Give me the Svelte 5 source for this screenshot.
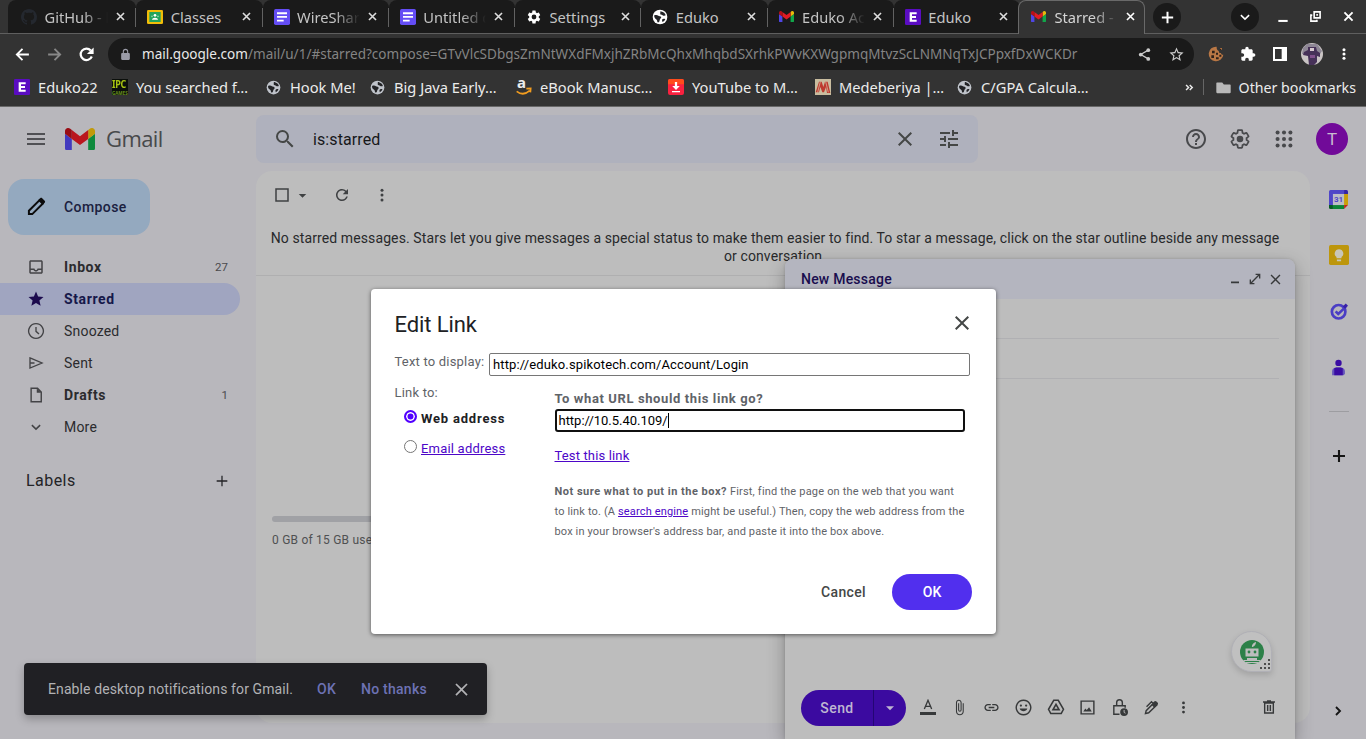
<script>
  const gmail = '<path fill="#4f46e5" d="M58 108h14V74L52 59v43c0 3.32 2.69 6 6 6"/><path fill="#11a64a" d="M120 108h14c3.32 0 6-2.69 6-6V59l-20 15"/><path fill="#e8b90c" d="M120 48v26l20-15v-8c0-7.42-8.47-11.65-14.4-7.2"/><path fill="#e01b24" d="M72 74V48l24 18 24-18v26L96 92"/><path fill="#b80f17" d="M52 51v8l20 15V48l-5.6-4.2c-5.94-4.45-14.4-.22-14.4 7.2"/>';
  const gear = 'M19.14 12.94c.04-.3.06-.61.06-.94 0-.32-.02-.64-.07-.94l2.03-1.58a.49.49 0 0 0 .12-.61l-1.92-3.32a.488.488 0 0 0-.59-.22l-2.39.96c-.5-.38-1.03-.7-1.62-.94l-.36-2.54a.484.484 0 0 0-.48-.41h-3.84c-.24 0-.43.17-.47.41l-.36 2.54c-.59.24-1.13.57-1.62.94l-2.39-.96c-.22-.08-.47 0-.59.22L2.74 8.87c-.12.21-.08.47.12.61l2.03 1.58c-.05.3-.09.63-.09.94s.02.64.07.94l-2.03 1.58a.49.49 0 0 0-.12.61l1.92 3.32c.12.22.37.29.59.22l2.39-.96c.5.38 1.03.7 1.62.94l.36 2.54c.05.24.24.41.48.41h3.84c.24 0 .44-.17.47-.41l.36-2.54c.59-.24 1.13-.56 1.62-.94l2.39.96c.22.08.47 0 .59-.22l1.92-3.32c.12-.22.07-.47-.12-.61z';
  const p = (d) => `<path d="${d}"/>`;
  const s = (d, w = 2) => `<path fill="none" stroke="currentColor" stroke-width="${w}" d="${d}"/>`;
  const globe = '<circle cx="12" cy="12" r="11"/><path fill="#222326" d="M3.3 9.5c2.2-.7 4.6-.9 6.2.6 1.2 1.1 3.1.3 4.1 1.7.9 1.3-.7 2.5-1.6 3.6-.9 1.2-.3 3.2-1.7 4.3-.9.7-2.3.1-2.4-1.1-.2-1.6-.3-2.6-1.8-3.4C4.3 14.2 3 12.3 3.3 9.5zM12.5 3.2c1.5.1 4 .8 5.8 2.5 1 1 1.9 2.300 2.300 3.800-1.500.8-3.500.8-4.700-.3-.9-.9-2.500-.3-3.300-1.500-.8-1.300.3-2.900-.1-4.500zM15.500 15.500c1-1.400 3.300-1 4.500-.3-.9 1.900-2.300 3.300-4.200 4.200-.7-1.200-1-2.800-.3-3.900z"/>';
  const dots = (r) => [5.5, 12, 18.5].map((y) => `<circle cx="12" cy="${y}" r="${r}"/>`).join('');
  const icons = {
    menu: p('M3 18h18v-2H3v2zm0-5h18v-2H3v2zm0-7v2h18V6H3z'),
    search: p('M15.5 14h-.79l-.28-.27A6.471 6.471 0 0 0 16 9.5 6.5 6.5 0 1 0 9.5 16c1.61 0 3.09-.59 4.23-1.57l.27.28v.79l5 4.99L20.49 19l-4.99-5zm-6 0C7.01 14 5 11.99 5 9.5S7.01 5 9.5 5 14 7.01 14 9.5 11.99 14 9.5 14z'),
    close: p('M19 6.41L17.59 5 12 10.59 6.41 5 5 6.41 10.59 12 5 17.59 6.41 19 12 13.41 17.59 19 19 17.59 13.41 12z'),
    boldclose: s('M5.5 5.5l13 13m0-13l-13 13', 3),
    tune: p('M3 17v2h6v-2H3zM3 5v2h10V5H3zm10 16v-2h8v-2h-8v-2h-2v6h2zM7 9v2H3v2h4v2h2V9H7zm14 4v-2H11v2h10zm-6-4h2V7h4V5h-4V3h-2v6z'),
    help: p('M11 18h2v-2h-2v2zm1-16C6.48 2 2 6.48 2 12s4.48 10 10 10 10-4.48 10-10S17.52 2 12 2zm0 18c-4.41 0-8-3.59-8-8s3.59-8 8-8 8 3.59 8 8-3.59 8-8 8zm0-14c-2.21 0-4 1.79-4 4h2c0-1.1.9-2 2-2s2 .9 2 2c0 2-3 1.75-3 5h2c0-2.25 3-2.5 3-5 0-2.21-1.79-4-4-4z'),
    gearline: s(gear, 1.9) + '<circle cx="12" cy="12" r="3.6"/>',
    gear: `<path fill-rule="evenodd" d="${gear}M12 15.6a3.6 3.6 0 1 1 0-7.2 3.6 3.6 0 0 1 0 7.2z"/>`,
    apps: [5, 12, 19].flatMap((x) => [5, 12, 19].map((y) => `<circle cx="${x}" cy="${y}" r="2.2"/>`)).join(''),
    refresh: p('M17.65 6.35A7.958 7.958 0 0 0 12 4c-4.42 0-7.99 3.58-7.99 8s3.57 8 7.99 8c3.73 0 6.84-2.55 7.73-6h-2.08A5.99 5.99 0 0 1 12 18c-3.31 0-6-2.69-6-6s2.69-6 6-6c1.66 0 3.14.69 4.22 1.78L13 11h7V4l-2.35 2.35z'),
    reload: s('M18.7 14.5a7.3 7.3 0 1 1-1.3-7.6', 2.8) + p('M21 3v8.5h-8.500z'),
    dots: dots(2), chromedots: dots(2.3),
    inbox: p('M19 3H5c-1.1 0-2 .9-2 2v14c0 1.1.9 2 2 2h14c1.1 0 2-.9 2-2V5c0-1.1-.9-2-2-2zm0 16H5v-3h3.56c.69 1.19 1.97 2 3.45 2s2.75-.81 3.45-2H19v3zm0-5h-4.99c0 1.1-.9 2-2 2s-2-.9-2-2H5V5h14v9z'),
    star: p('M12 17.27L18.18 21l-1.64-7.03L22 9.24l-7.19-.61L12 2 9.19 8.63 2 9.24l5.46 4.73L5.82 21z'),
    starline: p('M22 9.24l-7.19-.62L12 2 9.19 8.63 2 9.24l5.46 4.73L5.82 21 12 17.27 18.18 21l-1.63-7.03L22 9.24zM12 15.4l-3.76 2.27 1-4.28-3.32-2.88 4.38-.38L12 6.1l1.71 4.04 4.38.38-3.32 2.88 1 4.28L12 15.4z'),
    clock: s('M12 2.2a9.8 9.8 0 1 0 .01 0zM12 6.5v6l4 3.5', 1.8),
    send: s('M4 5.2l16 6.8-16 6.8zM4 12h6', 1.8),
    draft: s('M5.5 3h8.5l5 5v13h-13.5z', 1.9) + p('M13 3v6h6z'),
    down: s('M6.5 9.5l5.5 5.3 5.5-5.3', 2),
    right: s('M9 6l6 6-6 6', 2.8),
    plus: s('M12 4v16M4 12h16', 1.9),
    boldplus: s('M12 4v16M4 12h16', 2.8),
    caret: p('M6 9.5l6 6 6-6z'),
    box: s('M4 4h16v16H4z', 2),
    back: s('M21 12H4.5M12 4l-8 8 8 8', 2.6),
    forward: s('M3 12h16.5M12 4l8 8-8 8', 2.6),
    lock: '<path fill-rule="evenodd" d="M18 9h-1V6.5a5 5 0 0 0-10 0V9H6c-1.1 0-2 .9-2 2v9c0 1.1.9 2 2 2h12c1.1 0 2-.9 2-2v-9c0-1.1-.9-2-2-2zM9 9V6.5a3 3 0 0 1 6 0V9z"/>',
    share: s('M18 5L6 12l12 7', 2) + '<circle cx="18" cy="5" r="3"/><circle cx="6" cy="12" r="3"/><circle cx="18" cy="19" r="3"/>',
    puzzle: p('M20.5 11H19V7c0-1.1-.9-2-2-2h-4V3.5C13 2.12 11.88 1 10.5 1S8 2.12 8 3.5V5H4c-1.1 0-1.99.9-1.99 2v3.8H3.5c1.49 0 2.7 1.21 2.7 2.7s-1.21 2.7-2.7 2.7H2V20c0 1.1.9 2 2 2h3.8v-1.5c0-1.49 1.21-2.7 2.7-2.7 1.49 0 2.7 1.21 2.7 2.7V22H17c1.1 0 2-.9 2-2v-4h1.5c1.38 0 2.5-1.12 2.5-2.5S21.88 11 20.5 11z'),
    panel: '<path fill-rule="evenodd" d="M1.5 1.5h21v21h-21zM4.5 4.5v15h10v-15z"/>',
    cookie: '<path fill="#b97745" d="M13 1a11 11 0 1 0 10 12c-2 .3-3.5-.8-3.5-2.6-2.3.4-3.6-1-3.2-3C14 6.8 12.7 4 13 1zM18 3h3v3h-3z"/><path fill="#2e211a" d="M6 7h4v4H6zM5 14h4v4H5zM12 10h3v3h-3zM12 17h4v3h-4zM17 13h3v3h-3zM18 4h2v2h-2z"/>',
    github: '<path transform="scale(1.5)" fill="#24282f" d="M8 0C3.58 0 0 3.58 0 8c0 3.54 2.29 6.53 5.47 7.59.4.07.55-.17.55-.38 0-.19-.01-.82-.01-1.49-2.01.37-2.53-.49-2.69-.94-.09-.23-.48-.94-.82-1.13-.28-.15-.68-.52-.01-.53.63-.01 1.08.58 1.23.82.72 1.21 1.87.87 2.33.66.07-.52.28-.87.51-1.07-1.78-.2-3.64-.89-3.64-3.95 0-.87.31-1.59.82-2.15-.08-.2-.36-1.02.08-2.12 0 0 .67-.21 2.2.82.64-.18 1.32-.27 2-.27s1.36.09 2 .27c1.53-1.04 2.2-.82 2.2-.82.44 1.1.16 1.92.08 2.12.51.56.82 1.27.82 2.15 0 3.07-1.87 3.75-3.65 3.95.29.25.54.73.54 1.48 0 1.07-.01 1.93-.01 2.2 0 .21.15.46.55.38A8.01 8.01 0 0 0 16 8c0-4.42-3.58-8-8-8z"/>',
    classroom: '<rect y="1.5" width="24" height="21" rx="2" fill="#f2bd08"/><path fill="#21a35b" d="M3.5 4.5h17v15h-17z"/><circle cx="12" cy="9.5" r="2" fill="#fff"/><path fill="#fff" d="M7.5 16c0-4 9-4 9 0z"/><circle cx="7.5" cy="11" r="1.3" fill="#8dd3ac"/><circle cx="16.5" cy="11" r="1.3" fill="#8dd3ac"/>',
    docs: '<rect width="24" height="24" rx="2.5" fill="#644df5"/><path fill="#fff" d="M4.5 5h15v2.8h-15zM4.5 10.5h15v2.8h-15zM4.5 16h10v2.8h-10z"/>',
    globe,
    eduko: '<rect width="24" height="24" rx="2" fill="#5a0cc2"/><path fill="#fff" d="M7 5h10.5v3H10.5v2.5h6v3h-6V16h7v3H7z"/>',
    amazon: '<path fill="none" stroke="#f29c1f" stroke-width="2.6" d="M1 18.5c6.5 5 14 4 19.5-1M15.5 14.5l6.5-.5-.5 6"/>',
    ytdl: '<rect width="24" height="24" rx="3" fill="#f9213f"/><path fill="#ff4c1c" d="M3 0h18a3 3 0 0 1 3 3v5H0V3a3 3 0 0 1 3-3z"/><path fill="#fff" d="M10.3 4.5h3.4v6h4L12 16.5l-5.7-6h4zM6 18h12v2H6z"/>',
    mede: '<rect width="24" height="24" fill="#c9bd9f"/><path fill="#be3b2f" d="M6 4h4l2.5 8L15 4h4l4 17h-5l-1.5-9-3 8h-2.5l-3-8L6 20H1z"/><path stroke="#e0c9b0" d="M8 4L4 20M16 4l4 16"/>',
    folder: p('M2 4h8l2.5 3H22c.8 0 1.5.7 1.5 1.5v11c0 .8-.7 1.5-1.5 1.5H2c-.8 0-1.5-.7-1.5-1.5v-14C.5 4.7 1.2 4 2 4z'),
    chevrons: s('M4.5 6.5L10 12l-5.5 5.5M12.5 6.5L18 12l-5.5 5.5', 3.2),
    restore: s('M9.5 3.5h11v11h-11z', 3) + s('M6 9.500H3.500v11h11V18', 3) + p('M13.5 7.5h3v3h-3z'),
    minimize: p('M4 17h16v3.5H4z'),
    expand: s('M13 4h7v7M20 4L4 20M4 13v7h7', 2.3),
    pencil: s('M3.5 20.5v-4L16 4l4 4L7.5 20.5z', 2.4) + p('M15 3l2-1.5c.7-.7 1.7-.7 2.4 0l3 3c.7.7.7 1.7 0 2.4l-2 2z'),
    format: s('M6.5 15L12 2l5.5 13M8.5 11h7', 2) + p('M0 19.5h24V24H0z'),
    clip: p('M16.5 6v11.5c0 2.21-1.79 4-4 4s-4-1.79-4-4V5a2.5 2.5 0 0 1 5 0v10.5c0 .55-.45 1-1 1s-1-.45-1-1V6H10v9.5a2.5 2.5 0 0 0 5 0V5c0-2.21-1.79-4-4-4S7 2.79 7 5v12.5c0 3.04 2.46 5.5 5.5 5.5s5.5-2.46 5.5-5.5V6h-1.5z'),
    link: p('M3.9 12c0-1.71 1.39-3.1 3.1-3.1h4V7H7c-2.76 0-5 2.24-5 5s2.24 5 5 5h4v-1.9H7c-1.71 0-3.1-1.39-3.1-3.1zM8 13h8v-2H8v2zm9-6h-4v1.9h4c1.71 0 3.1 1.39 3.1 3.1s-1.39 3.1-3.1 3.1h-4V17h4c2.76 0 5-2.24 5-5s-2.24-5-5-5z'),
    smile: s('M12 1.8a10.2 10.2 0 1 0 .01 0z', 2) + '<circle cx="8.3" cy="9.3" r="1.6"/><circle cx="15.7" cy="9.3" r="1.6"/>' + p('M6.5 13.5h11c-1.8 5-9.2 5-11 0z'),
    drive: s('M9 3h6l7 12-3 5.5H5L2 15z', 2) + s('M12 8.5l4 7H8z', 2.2),
    image: s('M3 3h18v18H3z', 2) + p('M6 17.5l3-4 2 2.2 3.200-4.200L18 17.500z'),
    lockclock: s('M12 21.500H4v-12h16v3M8 9.500V5a4 4 0 0 1 8 0v4.500', 2) + '<circle cx="18.5" cy="18.5" r="5.5"/><path fill="none" stroke="#bdbdbd" stroke-width="1.3" d="M18.5 15.5V19l2 1"/>',
    pen: s('M3.500 20.500l1-4L16 5l3.500 3.500L8 19.500z', 2) + p('M12 8l4-4.500c1-1 2-1 3 0l1.500 1.500c1 1 1 2 0 3L16 12.500z') + s('M5 11l7-7 2 2', 2),
    trash: s('M5.500 6h13v15h-13zM3 4.500h18M9 3h6', 2.1) + s('M10 9v9M14 9v9', 2.2),
    calendar: '<path fill="#4f46c8" d="M0 2a2 2 0 0 1 2-2h17v5H5v14H0z"/><path fill="#3424a8" d="M19 0h3a2 2 0 0 1 2 2v3h-5z"/><path fill="#c99f0b" d="M19 5h5v14h-5z"/><path fill="#0c8537" d="M5 19h14v5H5z"/><path fill="#075c25" d="M0 19h5v5H2a2 2 0 0 1-2-2z"/><path fill="#bf2a20" d="M19 19h5l-5 5z"/><path fill="#bdbdc6" d="M5 5h14v14H5z"/>',
    keep: '<rect width="24" height="24" rx="2" fill="#bd960c"/><path fill="#c8c6b9" d="M12 5a5.200 5.200 0 0 0-3 9.400V16h6v-1.600A5.200 5.200 0 0 0 12 5zM9.500 17.500h5v2h-5z"/>',
    tasks: '<circle cx="11.5" cy="13" r="9" fill="none" stroke="#4a3dc4" stroke-width="3.6"/><path fill="none" stroke="#4a3dc4" stroke-width="3.5" d="M7.500 12.500l3.500 3.500 10-9.500"/><path fill="#3820a9" d="M17 6l4-4 3 3-4 4z"/>',
    contacts: '<circle cx="12" cy="5.5" r="4.5" fill="#3a0ca3"/><path fill="#6454ba" d="M3 23v-6c0-3 3-5 6-5h6c3 0 6 2 6 5v4l-2 2z"/><path fill="#3a0ca3" d="M6 23V13.200l3-1.200h6l3 1.200V23z"/>',
    robot: '<circle cx="12" cy="12" r="12" fill="#2c8048"/><path fill="#bdbdbd" d="M12 7c-.5-2 1.500-4.500 4-5 0 2.500-1.500 4.500-3.500 5zM5.500 8.500h13v8h-13zM7 18h10v2H7z"/><path fill="none" stroke="#bdbdbd" d="M3.500 20.500h17M6 22.500h12"/><circle cx="9" cy="12" r="1.4" fill="#2c8048"/><circle cx="15" cy="12" r="1.4" fill="#2c8048"/>'
  };
  const tabs = [
    ['github', 'GitHub - k', true], ['classroom', 'Classes'], ['docs', 'WireShar', true], ['docs', 'Untitled d', true],
    ['gear', 'Settings'], ['globe', 'Eduko'], ['gmail', 'Eduko Ac', true], ['eduko', 'Eduko'], ['gmail', 'Starred -', true]
  ];
  const bookmarks = [
    ['eduko', 'Eduko22', 98], ['ipc', 'You searched f…', 154], ['globe', 'Hook Me!', 104], ['globe', 'Big Java Early…', 146],
    ['amazon', 'eBook Manusc…', 152], ['ytdl', 'YouTube to M…', 147], ['mede', 'Medeberiya |…', 142], ['globe', 'C/GPA Calcula…', 160]
  ];
  const nav = [
    ['inbox', 'Inbox', '27', 'bold'], ['star', 'Starred', '', 'bold active'], ['clock', 'Snoozed', '', ''],
    ['send', 'Sent', '', ''], ['draft', 'Drafts', '1', 'bold'], ['down', 'More', '', '']
  ];
  const tools = ['format', 'clip', 'link', 'smile', 'drive', 'image', 'lockclock', 'pen', 'dots'];
</script>

{#snippet icon(name, size = 20)}
  {#if name === 'gmail'}
    <svg width={size} height={size * 0.75} viewBox="52 42 88 66">{@html gmail}</svg>
  {:else}
    <svg width={size} height={size} viewBox="0 0 24 24" fill="currentColor">{@html icons[name]}</svg>
  {/if}
{/snippet}

<div class="browser">
  <div class="tabs">
    {#each tabs as [ic, label, fade], i}
      <div class="tab" class:current={i === 8} class:nosep={i === 7}>
        <span class="fav">{@render icon(ic, ic === 'gmail' ? 15 : 16)}</span>
        <span class="label" class:fade>{label}</span>
        <span class="x">{@render icon('boldclose', 13)}</span>
      </div>
    {/each}
    <span class="round newtab">{@render icon('boldplus', 17)}</span>
    <span class="round menu">{@render icon('down', 18)}</span>
    <span class="win">{@render icon('minimize', 14)}</span>
    <span class="win">{@render icon('restore', 13)}</span>
    <span class="win">{@render icon('boldclose', 15)}</span>
  </div>
  <div class="toolbar">
    <span class="nav">{@render icon('back', 17)}</span>
    <span class="nav dim">{@render icon('forward', 17)}</span>
    <span class="nav">{@render icon('reload', 19)}</span>
    <div class="omni">
      <span class="lock">{@render icon('lock', 13)}</span>
      <span class="url"><b>mail.google.com</b>/mail/u/1/#starred?compose=GTvVlcSDbgsZmNtWXdFMxjhZRbMcQhxMhqbdSXrhkPWvKXWgpmqMtvzScLNMNqTxJCPpxfDxWCKDr</span>
      <span class="ob">{@render icon('share', 15)}</span>
      <span class="ob">{@render icon('starline', 17)}</span>
    </div>
    <span class="ext">{@render icon('cookie', 16)}</span>
    <span class="ext">{@render icon('puzzle', 16)}</span>
    <span class="ext">{@render icon('panel', 16)}</span>
    <span class="ext"><svg width="22" height="22" viewBox="0 0 22 22"><circle cx="11" cy="11" r="11" fill="#c9c4c4" /><path fill="#8e8795" d="M2 5l4-4 10 0 5 7-2 3H1z" /><path fill="#463158" d="M7 4h8l1 4 3 2v4l-3-1v6l-3 3H8l-1-9-5-1 1-3 4-2z" /><path fill="#d6c8ce" d="M9 5h4v3H9z" /><path fill="#81508c" d="M9 12h5v3H9z" /></svg></span>
    <span class="ext">{@render icon('chromedots', 16)}</span>
  </div>
  <div class="bookmarks">
    {#each bookmarks as [ic, label, w]}
      <div class="bm" style:width="{w}px">
        {#if ic === 'ipc'}<span class="ipc"><b>IPC</b><i>GAMES</i></span>
        {:else if ic === 'amazon'}<span class="amz"><b>a</b>{@render icon('amazon', 16)}</span>
        {:else}<span class="bi" class:grey={ic === 'globe'}>{@render icon(ic, ic === 'globe' ? 15 : 16)}</span>{/if}
        <span>{label}</span>
      </div>
    {/each}
    <div class="more">{@render icon('chevrons', 11)}<i></i><span class="folder">{@render icon('folder', 15)}</span><span class="other">Other bookmarks</span></div>
  </div>
</div>

<div class="page">
  <header>
    <span class="hm">{@render icon('menu', 24)}</span>
    <span class="logo">{@render icon('gmail', 30)}</span>
    <span class="brand">Gmail</span>
    <div class="search">
      <span class="si">{@render icon('search', 24)}</span><span class="q">is:starred</span>
      <span class="sb">{@render icon('close', 24)}</span><span class="sb">{@render icon('tune', 24)}</span>
    </div>
    <div class="tools"><span>{@render icon('help', 24)}</span><span>{@render icon('gearline', 22)}</span><span>{@render icon('apps', 22)}</span><span><i class="avatar">T</i></span></div>
  </header>
  <div class="body">
    <aside>
      <div class="compose">{@render icon('pencil', 20)}<span>Compose</span></div>
      <nav>
        {#each nav as [ic, label, n, cls]}
          <div class="item {cls}"><span class="ni">{@render icon(ic, 18)}</span><span class="nl">{label}</span><span class="n">{n}</span></div>
        {/each}
      </nav>
      <div class="labels"><span>Labels</span>{@render icon('plus', 16)}</div>
    </aside>
    <main>
      <div class="bar"><span>{@render icon('box', 18)}</span><span class="car">{@render icon('caret', 15)}</span><span class="rf">{@render icon('refresh', 18)}</span>{@render icon('dots', 18)}</div>
      <p class="empty">No starred messages. Stars let you give messages a special status to make them easier to find. To star a message, click on the star outline beside any message<br />or conversation.</p>
      <div class="storage"><div class="meter"></div><span>0 GB of 15 GB used</span></div>
    </main>
    <div class="side">
      <span class="cal">{@render icon('calendar', 19)}<b>31</b></span>
      <span>{@render icon('keep', 20)}</span>
      <span>{@render icon('tasks', 18)}</span>
      <span>{@render icon('contacts', 17)}</span>
      <i></i>
      <span class="add">{@render icon('boldplus', 18)}</span>
      <span class="chev">{@render icon('right', 16)}</span>
    </div>
  </div>
</div>

<section class="message">
  <div class="mh"><b>New Message</b><span>{@render icon('minimize', 12)}</span><span>{@render icon('expand', 14)}</span><span>{@render icon('close', 17)}</span></div>
  <div class="field"></div>
  <div class="field"></div>
  <div class="blank"></div>
  <div class="mf">
    <div class="sendbtn"><b>Send</b><span>{@render icon('caret', 16)}</span></div>
    {#each tools as t}<span class="tool">{@render icon(t, t === 'drive' ? 18 : t === 'format' ? 16 : 17)}</span>{/each}
    <span class="tool bin">{@render icon('trash', 16)}</span>
  </div>
  <div class="badge">{@render icon('robot', 24)}<svg class="grip" width="10" height="10" viewBox="0 0 10 10" fill="#4d4d4d"><path d="M8 0h2v2H8zM4 4h2v2H4zM8 4h2v2H8zM0 8h2v2H0zM4 8h2v2H4zM8 8h2v2H8z" /></svg></div>
</section>

<div class="toast"><span class="tt">Enable desktop notifications for Gmail.</span><b>OK</b><b class="nt">No thanks</b>{@render icon('close', 21)}</div>

<div class="dialog">
  <div class="dh"><h1>Edit Link</h1>{@render icon('close', 24)}</div>
  <div class="row"><span class="ttd">Text to display:</span><div class="input">http://eduko.spikotech.com/Account/Login</div></div>
  <div class="cols">
    <div class="left">
      <span class="lt">Link to:</span>
      <div class="opt"><i class="radio on"></i><b>Web address</b></div>
      <div class="opt"><i class="radio"></i><u>Email address</u></div>
    </div>
    <div class="rightcol">
      <b class="q1">To what URL should this link go?</b>
      <div class="input focus">http://10.5.40.109/<i class="cursor"></i></div>
      <u class="test">Test this link</u>
      <p><span class="l1"><b>Not sure what to put in the box?</b> First, find the page on the web that you want</span><br /><span class="l2">to link to. (A <u>search engine</u> might be useful.) Then, copy the web address from the</span><br /><span class="l3">box in your browser's address bar, and paste it into the box above.</span></p>
    </div>
  </div>
  <div class="actions"><span class="cancel">Cancel</span><span class="ok">OK</span></div>
</div>

<style>
  :global(body) { overflow: hidden; background: #b8b7bc; }
  :global(#app) { position: relative; width: 1366px; height: 739px; overflow: hidden; font-family: Roboto, sans-serif; }
  :global(#app *) { box-sizing: border-box; }
  :global(#app svg) { display: block; flex: none; }
  span, b { white-space: nowrap; }
  .browser { height: 107px; background: #333; border-bottom: 1px solid #686868; color: #fff; font-family: "Noto Sans", sans-serif; font-size: 14.67px; }
  .tabs { display: flex; height: 34px; padding-left: 10px; align-items: flex-start; background: linear-gradient(#5f5f5f, #5f5f5f) 0 33px / 100% 1px no-repeat; }
  .tab { position: relative; flex: none; width: 126.25px; height: 33px; display: flex; align-items: center; padding-left: 11px; background: #1a1a1a; border-radius: 8px 8px 0 0; color: #c4c4c4; }
  .tab:first-child { margin-left: -2px; width: 128.25px; padding-left: 13px; }
  .tab::after { content: ""; position: absolute; right: 0; top: 8px; width: 1px; height: 19px; background: #626262; z-index: 1; }
  .tab.current::after, .tab.nosep::after { display: none; }
  .tab.current { height: 34px; background: #333; border: 1px solid #696969; border-bottom: 0; margin-left: -2px; padding: 0 0 2px 12px; width: 127px; color: #d5d5d5; z-index: 2; }
  .fav { width: 23.5px; flex: none; color: #fff; }
  .label { width: 64px; overflow: hidden; flex: none; line-height: 24px; }
  .label.fade { width: 63px; margin-right: 1px; -webkit-mask-image: linear-gradient(90deg, #000 60%, transparent 100%); mask-image: linear-gradient(90deg, #000 60%, transparent 100%); }
  .x { margin-left: 5px; color: #ddd; }
  .current .x { color: #fff; }
  .round { display: grid; place-items: center; width: 28px; height: 28px; border-radius: 50%; background: #1a1a1a; margin-top: 3px; flex: none; }
  .newtab { margin-left: 8px; }
  .menu { margin-left: 50px; }
  .win { width: 32.5px; height: 33px; display: grid; place-items: center; flex: none; }
  .menu + .win { margin-left: 8px; }
  .toolbar { height: 40px; display: flex; align-items: center; padding-left: 6px; }
  .nav, .ext { width: 32px; display: grid; place-items: center; flex: none; }
  .dim { color: #888; }
  .omni { width: 1086px; margin: 0 6px; height: 32px; border-radius: 16px; background: #1a1a1a; display: flex; align-items: center; color: #848484; flex: none; }
  .omni b { font-weight: 400; color: #e8e8e8; }
  .lock { width: 34px; padding-left: 11px; color: #9a9ba7; flex: none; }
  .url { flex: 1; font-size: 13.54px; }
  .ob { width: 32px; display: grid; place-items: center; color: #ccc; flex: none; }
  .ob:last-child { margin-right: 2px; }
  .bookmarks { height: 32px; display: flex; align-items: center; padding-left: 14px; margin-top: -3px; color: #ececec; }
  .bm { display: flex; align-items: center; flex: none; }
  .bi, .ipc, .amz { width: 24px; flex: none; }
  .grey { color: #bfc3ca; }
  .ipc { margin-right: 8px; width: 16px; height: 16px; background: #0b0f0b; color: #a8c412; font-size: 9px; letter-spacing: -.3px; overflow: hidden; display: flex; flex-direction: column; gap: 2px; }
  .ipc b { transform: scaleY(1.2); line-height: 10px; }
  .ipc i { font-size: 4.5px; line-height: 4px; font-style: normal; color: #658e1b; font-weight: 700; letter-spacing: 0; }
  .amz { position: relative; height: 16px; }
  .amz b { position: absolute; left: 1px; top: -8px; font-size: 15px; line-height: 22px; }
  .more { margin-left: auto; display: flex; align-items: center; padding-right: 10px; }
  .more i { height: 16px; width: 1px; background: #666; margin: 0 12px 0 8px; }
  .folder { color: #b9b9b9; width: 23px; }
  .other { font-size: 14.2px; }

  .page { height: 632px; background: #b8b7bc; color: #3d3d40; }
  header { height: 64px; display: flex; align-items: center; }
  .hm { width: 65px; padding-left: 24px; color: #505054; flex: none; }
  .logo { width: 41px; flex: none; filter: brightness(.83); }
  .brand { width: 150px; flex: none; font-family: "Open Sans", sans-serif; font-size: 22px; line-height: 30px; margin-top: -2px; color: #48494b; letter-spacing: -.6px; }
  .search { width: 722px; height: 48px; border-radius: 8px; background: #afb1bd; display: flex; align-items: center; padding-left: 17px; flex: none; color: #454746; }
  .si { width: 39px; }
  .q { flex: 1; font-size: 16px; color: #17181a; padding-left: 1px; letter-spacing: .1px; }
  .sb { width: 44px; display: grid; place-items: center; }
  .sb:last-child { margin-right: 7px; }
  .tools { display: flex; margin-left: 196px; color: #48494c; }
  .tools span { width: 44px; display: grid; place-items: center; }
  .tools span:last-child { width: 52px; }
  .avatar { width: 32px; height: 32px; border-radius: 50%; background: #710a99; color: #c8bdcf; font: 17px/33px Roboto, sans-serif; text-align: center; }
  .body { display: flex; height: 568px; }
  aside { width: 256px; padding-top: 8px; flex: none; }
  .compose { margin-left: 8px; width: 142px; height: 56px; border-radius: 16px; background: #94a9bf; display: flex; align-items: center; gap: 18px; padding-left: 18px; font-size: 14px; font-weight: 500; color: #1b2140; letter-spacing: .42px; }
  :global(.compose svg) { color: #0b0b0b; }
  aside nav { padding-top: 16px; }
  .item { width: 240px; height: 32px; display: flex; align-items: center; padding: 0 12px 0 27px; border-radius: 0 16px 16px 0; font-size: 14px; color: #2b2b2e; }
  .ni { width: 37px; color: #434346; flex: none; }
  .nl { flex: 1; letter-spacing: .2px; }
  .bold .nl { font-weight: 700; letter-spacing: .6px; }
  .n { font-size: 11.5px; color: #4a4a4d; }
  .active { background: #a0a5c0; color: #16184a; }
  .active .ni { color: #1c0b4e; }
  .labels { display: flex; justify-content: space-between; align-items: center; height: 42px; margin-top: 16.5px; padding: 0 26px; font-size: 16px; line-height: 18px; color: #232326; letter-spacing: .45px; }
  main { width: 1054px; height: 552px; flex: none; border-radius: 16px; background: #bdbdbd; overflow: hidden; color: #3e4042; }
  .bar { height: 48px; display: flex; align-items: center; padding-left: 17px; color: #3f4143; }
  .car { width: 41px; padding-left: 3.500px; }
  .bar .rf { width: 41px; padding-left: 1px; }
  .empty { margin: 0; height: 57px; padding: 10px 16px 0 0; text-align: center; font-size: 14px; line-height: 18px; color: #28292b; border-bottom: 1px solid #afafb0; letter-spacing: .105px; white-space: nowrap; }
  .storage { margin-top: 240px; padding-left: 16px; font-size: 12px; color: #4f5052; letter-spacing: .22px; }
  .meter { width: 224px; height: 6px; border-radius: 3px; background: #a0a1a5; margin-bottom: 11px; }
  .side { width: 56px; display: flex; flex-direction: column; align-items: center; padding-left: 1px; }
  .side > span { height: 56px; display: grid; place-items: center; flex: none; }
  .side > i { width: 20px; height: 1px; background: #9d9da1; margin: 16px 0 15px; }
  .cal { position: relative; }
  .cal b { position: absolute; font-size: 8px; color: #4f46c8; }
  .side .add { color: #151515; height: 58px; }
  .side .chev { color: #151515; margin: 198px 2px 0 0; }

  .message { position: absolute; left: 785px; top: 259px; width: 510px; height: 480px; background: #bdbdbd; border-radius: 8px 8px 0 0; box-shadow: 0 6px 18px rgba(0,0,0,.3), 0 0 3px rgba(0,0,0,.15); display: flex; flex-direction: column; color: #37393a; }
  .mh { height: 40px; flex: none; background: #b4b5bf; border-radius: 8px 8px 0 0; display: flex; align-items: center; padding: 0 10px 0 16px; font-size: 14px; }
  .mh b { flex: 1; font-weight: 500; color: #190d4e; letter-spacing: .22px; }
  .mh span { width: 20px; display: grid; place-items: center; }
  .field { height: 40px; margin: 0 16px; border-bottom: 1px solid #b0b0b3; flex: none; }
  .blank { flex: 1; }
  .mf { height: 64px; display: flex; align-items: center; padding: 0 10px 0 16px; }
  .sendbtn { width: 105px; height: 36px; border-radius: 18px; background: #3b0aa0; color: #bfb7d2; display: flex; overflow: hidden; font-size: 14px; margin: 2px 5.500px 0 0; }
  .sendbtn b { width: 72px; line-height: 36px; text-align: center; font-weight: 500; letter-spacing: .4px; }
  .sendbtn span { flex: 1; display: grid; place-items: center; border-left: 1px solid #240674; padding-right: 1px; }
  .tool { width: 32px; display: grid; place-items: center; flex: none; }
  .bin { margin-left: auto; }
  .badge { position: absolute; left: 446px; top: 372px; width: 41px; height: 41px; border: 1px solid #b0b0b6; border-radius: 50% 50% 3px 50%; display: grid; place-items: center; box-shadow: 0 3px 6px rgba(0,0,0,.15); background: #c0c0c0; }
  .grip { position: absolute; right: 1px; bottom: 2px; }

  .toast { position: absolute; left: 24px; top: 663px; width: 463px; height: 52px; border-radius: 4px; background: #202024; display: flex; align-items: center; padding-left: 24px; color: #b2b2b5; font-size: 14px; box-shadow: 0 4px 8px rgba(0,0,0,.25); }
  .tt { width: 269px; letter-spacing: .1px; }
  .toast b { width: 44px; font-weight: 500; color: #6d72b4; letter-spacing: .25px; }
  .toast .nt { width: 89.500px; }

  .dialog { position: absolute; left: 371px; top: 289px; width: 625px; height: 345px; background: #fff; border-radius: 4px; box-shadow: 0 1px 4px rgba(0,0,0,.55); padding: 20px 24px 24px 23.500px; display: flex; flex-direction: column; font-size: 13px; color: #5f6368; }
  .dh { display: flex; justify-content: space-between; align-items: center; height: 28px; margin-right: -2px; color: #444746; }
  h1 { margin: 3px 0 0; font-size: 22px; font-weight: 400; color: #202124; letter-spacing: -.1px; }
  .row { display: flex; align-items: center; margin-top: 16px; height: 23px; }
  .ttd { width: 94.500px; margin-top: -6px; letter-spacing: .2px; flex: none; }
  .input { height: 23px; width: 481px; border: 1px solid #767676; border-radius: 2px; line-height: 21px; padding-left: 3px; color: #000; display: flex; align-items: center; letter-spacing: .13px; }
  .cols { display: flex; height: 190px; }
  .left { width: 160px; padding-top: 9px; flex: none; }
  .lt { display: block; line-height: 15px; letter-spacing: .2px; }
  .opt { display: flex; height: 30px; align-items: center; padding-left: 9.500px; gap: 4px; color: #202124; }
  .opt b { padding-top: 6px; letter-spacing: .8px; }
  .opt u { margin-top: 6px; letter-spacing: .2px; }
  .radio { width: 13px; height: 13px; border: 1px solid #767676; border-radius: 50%; flex: none; margin-top: 2px; }
  .radio.on { border: 2px solid #5200ff; background: #5200ff; box-shadow: inset 0 0 0 1.5px #fff; }
  u { color: #4d06c8; }
  .rightcol { padding-top: 14px; }
  .q1 { display: block; line-height: 17px; letter-spacing: .61px; margin-bottom: 2px; }
  .input.focus { width: 410px; height: 23px; border: 2px solid #101010; border-radius: 3px; padding-left: 2px; letter-spacing: -.02px; }
  .cursor { width: 1px; height: 15px; background: #000; }
  .test { display: block; margin-top: 15px; line-height: 17px; letter-spacing: .15px; }
  .rightcol p { margin: 18px 0 0; font-size: 11px; line-height: 20px; letter-spacing: .15px; white-space: nowrap; }
  .rightcol p b { letter-spacing: .5px; }
  .l1 { letter-spacing: .19px; }
  .actions { display: flex; justify-content: flex-end; align-items: center; margin-top: auto; font-size: 14px; font-weight: 500; height: 36px; }
  .cancel { color: #444746; margin-right: 26px; letter-spacing: .35px; }
  .ok { width: 80px; height: 36px; border-radius: 18px; background: #512fee; color: #fff; text-align: center; line-height: 36px; }
</style>
